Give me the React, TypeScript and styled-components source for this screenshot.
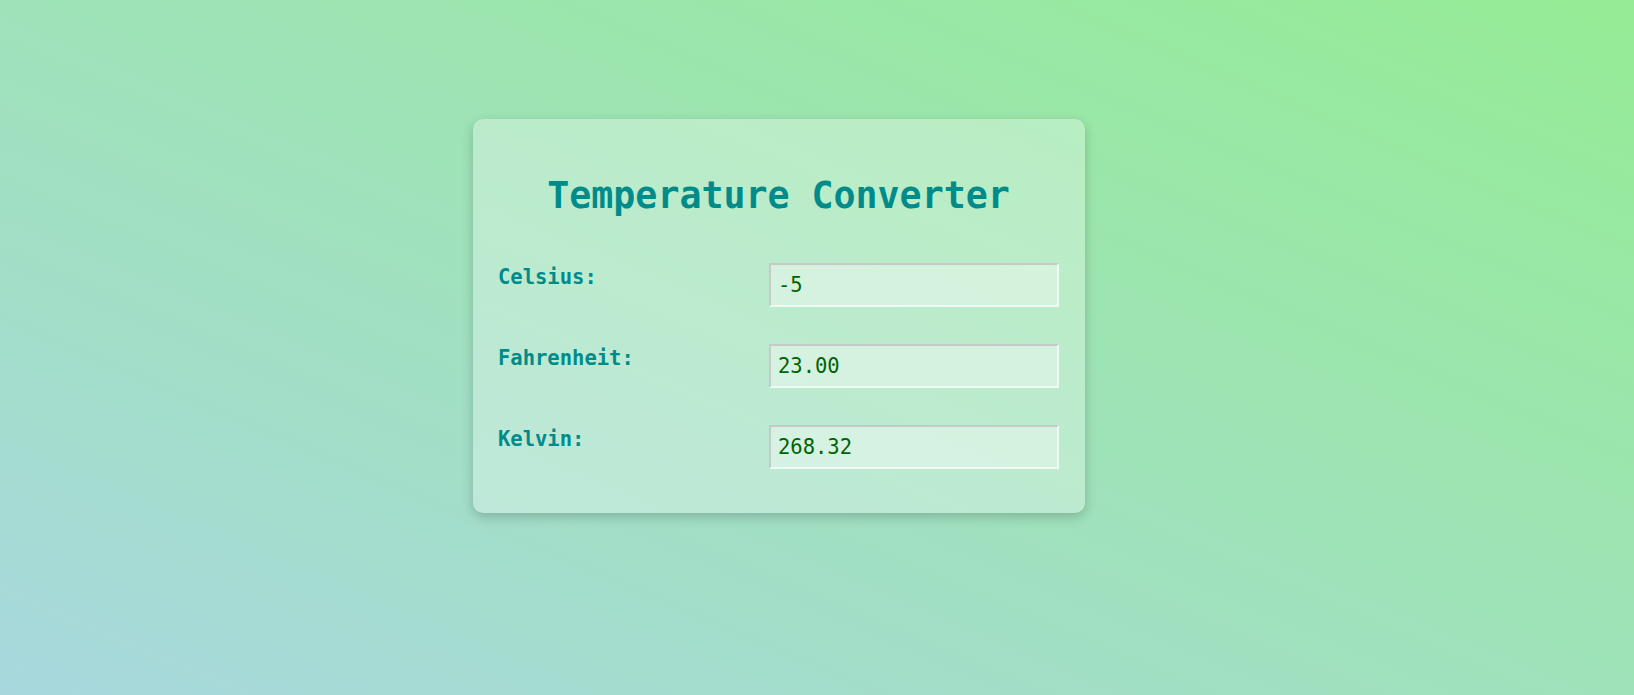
import React, { useState } from "react";
import styled, { createGlobalStyle } from "styled-components";

const GlobalStyle = createGlobalStyle`
  html, body {
    margin: 0;
    padding: 0;
    height: 100%;
  }
  body {
    font-family: "DejaVu Sans Mono", monospace;
  }
  #root {
    min-height: 100vh;
  }
`;

const Page = styled.div`
  min-height: 100vh;
  box-sizing: border-box;
  background: linear-gradient(to top right, #a8d8de, #95ec95);
  padding: 119px 0 0 473px;
`;

const Card = styled.div`
  width: 612px;
  box-sizing: border-box;
  padding: 0 26px 44px 25px;
  border-radius: 10px;
  background: rgba(255, 255, 255, 0.3);
  box-shadow: 0 4px 12px rgba(0, 0, 0, 0.2);
  display: flex;
  flex-direction: column;
`;

const Title = styled.h1`
  margin: 55px 0 46px;
  text-align: center;
  font-family: "DejaVu Sans Mono", monospace;
  font-size: 36.6px;
  font-weight: bold;
  color: #008b8b;
`;

const Rows = styled.div`
  display: flex;
  flex-direction: column;
  gap: 37px;
`;

const Row = styled.div`
  display: flex;
  justify-content: space-between;
  align-items: flex-start;
`;

const Label = styled.label`
  padding-top: 2px;
  font-family: "DejaVu Sans Mono", monospace;
  font-size: 20.5px;
  font-weight: bold;
  color: #008b8b;
`;

const Input = styled.input`
  width: 290px;
  height: 44px;
  box-sizing: border-box;
  padding: 0 7px;
  border-width: 2px;
  border-style: solid;
  border-color: #c6c9c6 #eefaf2 #eefaf2 #c6c9c6;
  background: rgba(255, 255, 255, 0.38);
  font-family: "DejaVu Sans Mono", monospace;
  font-size: 20.5px;
  color: #006400;
  outline: none;
`;

export default function App() {
  const [c, setC] = useState("-5");
  const cNum = parseFloat(c);
  const f = isNaN(cNum) ? "" : ((cNum * 9) / 5 + 32).toFixed(2);
  const k = isNaN(cNum) ? "" : (cNum + 273.32).toFixed(2);
  return (
    <>
      <GlobalStyle />
      <Page>
        <Card>
          <Title>Temperature Converter</Title>
          <Rows>
            <Row>
              <Label htmlFor="c">Celsius:</Label>
              <Input id="c" value={c} onChange={(e) => setC(e.target.value)} />
            </Row>
            <Row>
              <Label htmlFor="f">Fahrenheit:</Label>
              <Input id="f" value={f} readOnly />
            </Row>
            <Row>
              <Label htmlFor="k">Kelvin:</Label>
              <Input id="k" value={k} readOnly />
            </Row>
          </Rows>
        </Card>
      </Page>
    </>
  );
}
